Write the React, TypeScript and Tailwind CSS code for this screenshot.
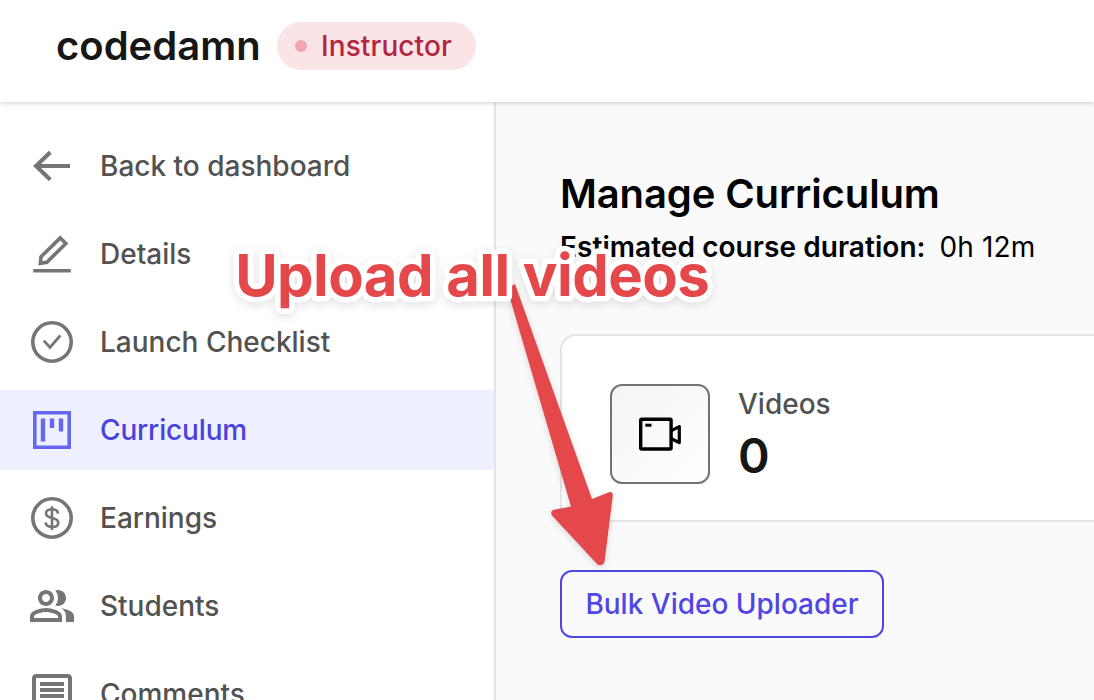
import type { ReactNode } from 'react'
import { MdOutlineComment, MdOutlinePeopleAlt } from 'react-icons/md'

function LineIcon({ children }: { children: ReactNode }) {
  return (
    <svg
      viewBox="0 0 48 48"
      className="size-12"
      fill="none"
      stroke="currentColor"
      strokeWidth="3.6"
    >
      {children}
    </svg>
  )
}

const items: { label: string; icon: ReactNode; active?: boolean }[] = [
  {
    label: 'Back to dashboard',
    icon: (
      <LineIcon>
        <path d="M42 24H8M22.3 10.2L8 24L22.3 37.8" strokeWidth="4" />
      </LineIcon>
    ),
  },
  {
    label: 'Details',
    icon: (
      <LineIcon>
        <path d="M32.3 7.9L37.9 13.5L18.9 32.2L12.4 33.3L13 26.8Z" />
        <path d="M5.2 40.8H42.8" />
      </LineIcon>
    ),
  },
  {
    label: 'Launch Checklist',
    icon: (
      <LineIcon>
        <circle cx="24" cy="24" r="19.2" />
        <path d="M15.8 22.6L22 29.4L32.4 17.4" strokeWidth="2.8" />
      </LineIcon>
    ),
  },
  {
    label: 'Curriculum',
    active: true,
    icon: (
      <LineIcon>
        <path d="M6.8 6.8H41.2V41.2H6.8Z" />
        <path d="M15 12.6V35.4M24 12.6V22M33 12.6V25.6" strokeWidth="4.4" />
      </LineIcon>
    ),
  },
  {
    label: 'Earnings',
    icon: (
      <LineIcon>
        <circle cx="24" cy="24" r="19.2" />
        <path
          d="M24 12.2V36M30 19.6C29.8 16.8 27.4 15.3 24 15.3C20.4 15.3 18 17 18 19.6C18 22 19.8 23.1 24 24C28.4 24.9 30.3 26.2 30.3 28.7C30.3 31.3 27.8 32.9 24 32.9C20.2 32.9 17.8 31.2 17.6 28.4"
          strokeWidth="2.6"
        />
      </LineIcon>
    ),
  },
  { label: 'Students', icon: <MdOutlinePeopleAlt className="size-12" /> },
  { label: 'Comments', icon: <MdOutlineComment className="size-12" /> },
]

function Header() {
  return (
    <header className="relative z-10 flex h-[102px] shrink-0 items-start bg-white pl-14 pt-[22px] shadow-[0_1px_5px_rgba(0,0,0,0.2)]">
      <span className="w-[205px] text-[40px] leading-[48px] font-semibold text-neutral-900">
        codedamn
      </span>
      <span className="ml-4 flex h-12 w-[199px] items-center rounded-full bg-[#fbe4e6] pl-[18px] text-[28px] font-medium tracking-[0.1px] text-[#b3263f]">
        <span className="mr-3.5 size-3 rounded-full bg-[#f0a6ae]" />
        Instructor
      </span>
    </header>
  )
}

function Sidebar() {
  return (
    <nav className="flex w-[496px] shrink-0 flex-col gap-2 border-r-2 border-[#e4e4e4] bg-white pt-6">
      {items.map((item) => (
        <a
          key={item.label}
          className={
            item.active
              ? 'flex h-20 shrink-0 items-center gap-6 bg-[#eef0ff] pl-7 tracking-[-0.15px] text-[#4a42dc]'
              : 'flex h-20 shrink-0 items-center gap-6 pl-7 text-[#525252]'
          }
        >
          <span className={item.active ? 'text-[#6568ee]' : 'text-[#757575]'}>{item.icon}</span>
          <span className="text-[28px] font-medium">{item.label}</span>
        </a>
      ))}
    </nav>
  )
}

function VideoIcon() {
  return (
    <svg viewBox="0 0 48 48" className="size-12" fill="none" stroke="#000" strokeWidth="3.4">
      <rect x="4.7" y="9.2" width="30.4" height="29.8" rx="1" />
      <path d="M9.3 15.2H15.5" strokeWidth="3" />
      <path d="M35.5 20.6L43.3 16.6V32.6L35.5 28.8" strokeWidth="3.2" strokeLinejoin="round" />
    </svg>
  )
}

function Main() {
  return (
    <main className="flex min-w-0 grow flex-col items-start bg-[#fafafa] pl-16 pt-[66px]">
      <h1 className="text-[40px] leading-[52px] font-semibold tracking-[-0.12px] whitespace-nowrap">
        Manage Curriculum
      </h1>
      <p className="mt-[7px] text-[28px] leading-[40px] whitespace-nowrap">
        <span className="font-semibold tracking-[0.06px]">Estimated course duration:</span>
        <span className="ml-[14px] tracking-[0.1px]">0h 12m</span>
      </p>
      <section className="mt-[67px] -mr-5 flex h-[188px] w-[600px] items-center gap-7 rounded-l-2xl border-2 border-[#e4e4e4] bg-white pl-12">
        <div className="mt-3 flex size-[100px] items-center justify-center rounded-xl border-2 border-[#737373] bg-linear-to-br from-[#f4f4f4] to-white">
          <VideoIcon />
        </div>
        <div className="mt-4">
          <div className="text-[28px] leading-10 font-medium text-[#525252]">Videos</div>
          <div className="text-[48px] leading-[64px] font-semibold text-neutral-900">0</div>
        </div>
      </section>
      <button className="mt-12 h-[68px] w-[324px] rounded-xl border-2 border-[#4f46e5] text-[28px] font-medium whitespace-nowrap text-[#4f46e5]">
        Bulk Video Uploader
      </button>
    </main>
  )
}

function Annotation() {
  return (
    <svg
      viewBox="0 0 1094 700"
      className="pointer-events-none absolute inset-0 z-20 h-full w-full font-['Inter',sans-serif]"
    >
      <path
        d="M507 288L515 284L592 499L609 492.2Q613 491.5 612.8 496L604.5 562Q602 567 597.5 564.5L552 515.5Q549.5 511 554 509.8L571 506.5Z"
        fill="#e5484b"
        className="drop-shadow-[0_2px_3px_rgba(0,0,0,0.15)]"
      />
      <text
        x="235.2"
        y="295.6"
        fill="#e5484b"
        stroke="#fff"
        strokeWidth="11"
        strokeLinejoin="round"
        paintOrder="stroke"
        className="text-[58px] font-bold tracking-[-0.55px] drop-shadow-[0_3px_4px_rgba(0,0,0,0.11)]"
      >
        Upload all videos
      </text>
    </svg>
  )
}

export default function App() {
  return (
    <div className="relative flex h-[700px] w-[1094px] flex-col overflow-hidden bg-white font-['Inter',sans-serif] text-black">
      <Header />
      <div className="flex min-h-0 grow overflow-hidden">
        <Sidebar />
        <Main />
      </div>
      <Annotation />
    </div>
  )
}
